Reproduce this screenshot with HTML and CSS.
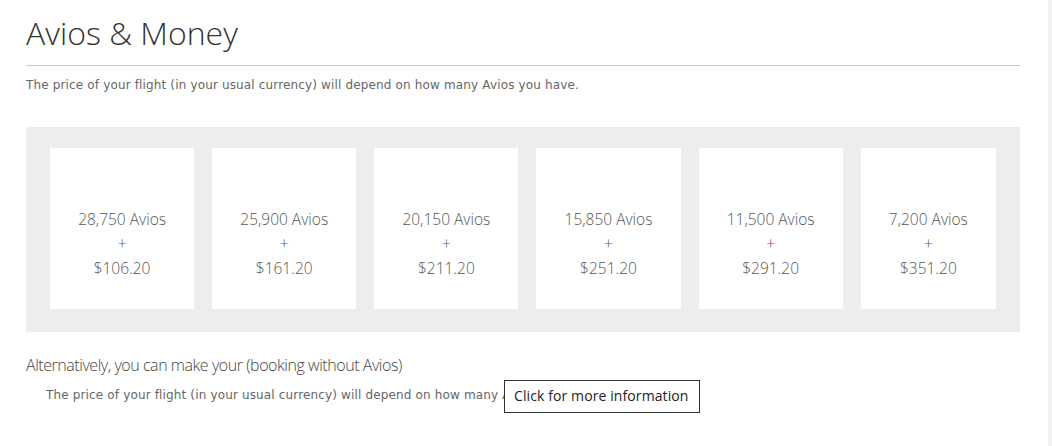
FILE: index.html
```html
<!DOCTYPE html>
<html lang="en">
<head>
    <meta charset="UTF-8">
    <meta name="viewport" content="width=device-width, initial-scale=1.0">
    <title>Avios &amp; Money</title>
    <link rel="stylesheet" href="styles.css">
</head>
<body>
    <div class="page">
        <h1 class="title">Avios &amp; Money</h1>
        <p class="intro">The price of your flight (in your usual currency) will depend on how many Avios you have.</p>

        <div class="options">
            <div class="option">28,750 Avios<br>+<br>$106.20</div>
            <div class="option">25,900 Avios<br>+<br>$161.20</div>
            <div class="option">20,150 Avios<br>+<br>$211.20</div>
            <div class="option">15,850 Avios<br>+<br>$251.20</div>
            <div class="option">11,500 Avios<br>+<br>$291.20</div>
            <div class="option">7,200 Avios<br>+<br>$351.20</div>
        </div>

        <p class="alt">Alternatively, you can make your (booking without Avios)</p>
        <div class="alt-note">
            <p class="note">The price of your flight (in your usual currency) will depend on how many Avios you have.</p>
            <div class="tip">Click for more information</div>
        </div>
    </div>
</body>
</html>
```

FILE: styles.css
```css
html {
    background: #f2f2f2;
}

body {
    margin: 0;
    width: 1048px;
    height: 446px;
    background: #fff;
    overflow: hidden;
}

.page {
    padding: 0 28px 0 26px;
}

.title {
    margin: 0;
    padding-top: 12px;
    padding-bottom: 11px;
    font-family: "Open Sans", sans-serif;
    font-weight: 300;
    font-size: 32px;
    line-height: 42px;
    color: #333;
    border-bottom: 1px solid #c8c8c8;
}

.intro {
    margin: 10px 0 0;
    font-family: "DejaVu Sans", Verdana, sans-serif;
    font-size: 12px;
    letter-spacing: 0.15px;
    line-height: 18px;
    color: #666;
}

.options {
    display: flex;
    gap: 18px;
    margin-top: 33px;
    padding: 21px 24px 23px;
    background: #ededed;
}

.option {
    flex: 1 1 auto;
    height: 161px;
    display: flex;
    align-items: center;
    justify-content: center;
    text-align: center;
    padding-top: 30px;
    box-sizing: border-box;
    background: #fff;
    font-family: "Open Sans", sans-serif;
    font-weight: 300;
    font-size: 15.5px;
    line-height: 24.5px;
    color: #555;
}

.alt {
    margin: 22px 0 0;
    font-family: "Open Sans", sans-serif;
    font-weight: 300;
    font-size: 16px;
    line-height: 22px;
    color: #444;
    letter-spacing: -0.45px;
}

.alt-note {
    position: relative;
    margin-top: 10px;
    padding-left: 20px;
}

.note {
    margin: 0;
    font-family: "DejaVu Sans", Verdana, sans-serif;
    font-size: 12px;
    letter-spacing: 0.15px;
    line-height: 18px;
    color: #666;
    white-space: nowrap;
}

.tip {
    position: absolute;
    left: 478px;
    top: -6px;
    padding: 5px 10px 6px 9px;
    background: #fff;
    border: 1px solid #333;
    font-family: "Open Sans", sans-serif;
    font-size: 14px;
    letter-spacing: 0.1px;
    line-height: 20px;
    color: #222;
}
```
